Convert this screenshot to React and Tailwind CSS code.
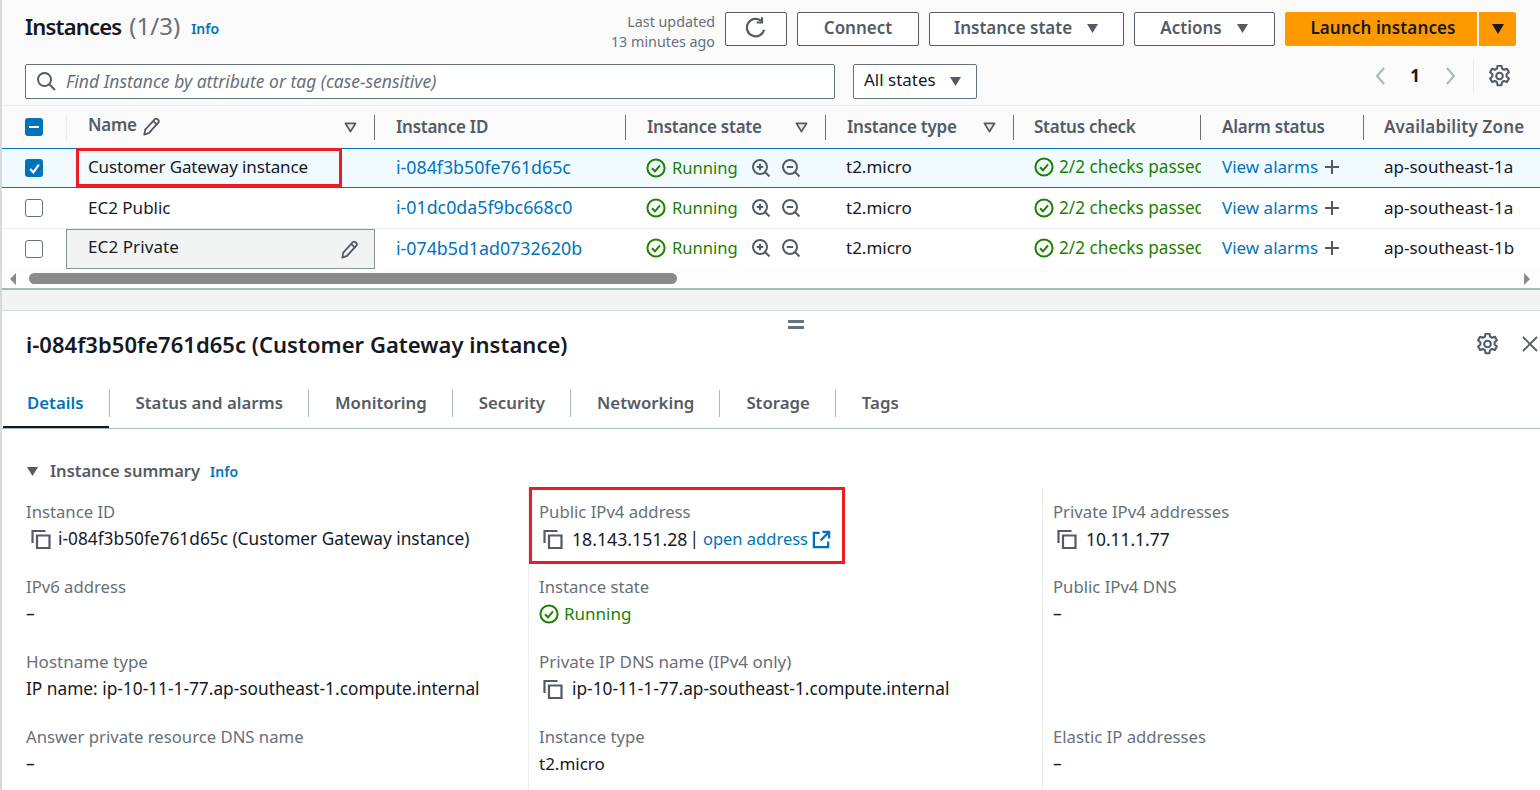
const Caret = ({ className = "" }) => (
  <svg viewBox="0 0 14 12" className={className}><path d="M1 1h12L7 11z" fill="#545b64" /></svg>
);
const FilterCaret = () => (
  <svg viewBox="0 0 14 12" className="w-[13px] h-[11px]"><path d="M1.5 1.5h11L7 10.5z" fill="#e9ebed" stroke="#545b64" strokeWidth="2" strokeLinejoin="round" /></svg>
);
const Pencil = () => (
  <svg viewBox="1.5 0.5 13 14.5" className="w-[17px] h-[19px]" fill="none" stroke="#545b64" strokeWidth="1.4" strokeLinejoin="round"><path d="M2.5 14l.7-3.8 7.2-7.9c.6-.6 1.5-.7 2.2-.1l.5.5c.6.6.6 1.5.1 2.1l-7.1 7.9z" /><path d="M9.3 3.6l3.2 2.9" /></svg>
);
const Check = ({ className = "w-5 h-5" }) => (
  <svg viewBox="0 0 20 20" className={`${className} shrink-0`} fill="none" stroke="#1d8102" strokeWidth="2"><circle cx="10" cy="10" r="8.6" /><path d="M6 10.3l3 3 5-6" /></svg>
);
const Zoom = ({ plus }) => (
  <svg viewBox="0 0 20 20" className="w-5 h-5 shrink-0" fill="none" stroke="#545b64" strokeWidth="2"><circle cx="9" cy="9" r="7" /><path d="M14 14l4.5 4.5" /><path d="M5.8 9h6.4" />{plus && <path d="M9 5.8v6.4" />}</svg>
);
const Copy = () => (
  <svg viewBox="0 0 20 20" className="w-5 h-5 shrink-0" fill="none" stroke="#545b64" strokeWidth="2.2"><path d="M1.5 14V2h13" /><path d="M6 6.5h12.5v12.5H6z" /></svg>
);
const Gear = () => (
  <svg viewBox="1.5 1 17 18" className="w-[21px] h-[22px]" fill="none" stroke="#545b64" strokeWidth="1.7" strokeLinejoin="round"><circle cx="10" cy="10" r="2.7" /><path d="M8.4 1.5h3.2l.5 2.5 1.6.9 2.4-.8 1.6 2.8-1.9 1.7v1.8l1.9 1.7-1.6 2.8-2.4-.8-1.6.9-.5 2.5H8.4l-.5-2.5-1.6-.9-2.4.8-1.6-2.8 1.9-1.7V8.6L2.3 6.9l1.6-2.8 2.4.8 1.6-.9z" /></svg>
);
const OuterBtn = ({ children, className = "" }) => (
  <button className={`h-[34px] pb-[2px] rounded-[2px] border border-[#545b64] bg-white flex items-center justify-center font-semibold text-[#545b64] text-[17px] ${className}`}>{children}</button>
);
const Head = ({ children, filter, cls = "pl-[21px]" }) => (
  <div className={`relative flex items-center justify-between pr-[18px] text-[17px] font-semibold text-[#545b64] h-full tracking-[-0.25px] ${cls}`}>
    <span className="flex items-center gap-[6px] whitespace-nowrap">{children}</span>
    {filter && <FilterCaret />}
    <span className="absolute right-0 top-[9px] h-[25px] w-px bg-[#687078]" />
  </div>
);
const rows = [
  { n: "Customer Gateway instance", id: "i-084f3b50fe761d65c", az: "ap-southeast-1a", sel: true, h: "h-10", pb: "pb-[2px]", rp: "", tr: "tracking-[-0.12px]" },
  { n: "EC2 Public", id: "i-01dc0da5f9bc668c0", az: "ap-southeast-1a", h: "h-[41px]", pb: "pb-[1px]", rp: "", tr: "" },
  { n: "EC2 Private", id: "i-074b5d1ad0732620b", az: "ap-southeast-1b", hov: true, h: "h-10", pb: "pb-[2px]", rp: "pb-[2px]", tr: "tracking-[0.1px]" },
];
const cols = "grid grid-cols-[67px_308px_251px_200px_188px_187px_163px_176px]";
const Field = ({ label, children, lc = "text-[16.7px]" }) => (
  <div className="h-[75px]">
    <div className={`text-[#687078] leading-[24px] whitespace-nowrap ${lc}`}>{label}</div>
    <div className="text-[#16191f] text-[17.3px] leading-[24px] mt-[3px] whitespace-nowrap flex items-center">{children}</div>
  </div>
);
const Dash = () => <span>–</span>;
const Tab = ({ children, active, last }) => (
  <div className="relative h-full flex items-center">
    <span className={`pb-[2px] text-[16.8px] font-semibold whitespace-nowrap ${active ? "text-[#0073bb] pl-[24px] pr-[25px]" : "text-[#545b64] pl-[26px] pr-[25px]"}`}>{children}</span>
    {!last && <span className="w-px h-[27px] bg-[#aab7b8]" />}
    {active && <span className="absolute left-0 right-px bottom-0 h-[2px] bg-[#16191f]" />}
  </div>
);
export default function App() {
  return (
    <div className="w-[1540px] h-[790px] overflow-hidden bg-white border-l-2 border-[#d5dbdb] flex flex-col font-['Noto_Sans',sans-serif]">
      <section className="bg-[#fafafa] h-[106px] shrink-0 border-b border-[#eaeded] pl-[23px] pr-[24px] pt-3">
        <div className="flex items-start h-[34px]">
          <div className="flex items-center h-[28px]">
            <h1 className="text-[22px] font-semibold text-[#16191f] tracking-[-0.8px]">Instances <span className="ml-[3px] text-[24px] tracking-normal font-normal text-[#687078]">(1/3)</span></h1>
            <span className="ml-[11px] mt-[5px] text-[#0073bb] text-[14px] font-semibold">Info</span>
          </div>
          <div className="ml-auto flex items-start">
            <div className="text-right text-[#687078] text-[14.3px] leading-[20px] mr-[10px]">Last updated<br />13 minutes ago</div>
            <OuterBtn className="w-[62px]">
              <svg viewBox="0 0 20 20" className="w-[24px] h-[24px]" fill="none" stroke="#545b64" strokeWidth="1.8"><path d="M16.8 11.5A7.3 7.3 0 1 1 14.6 4.2" /><path d="M15 1v4.4h-4.4" /></svg>
            </OuterBtn>
            <OuterBtn className="w-[122px] ml-[10px]">Connect</OuterBtn>
            <OuterBtn className="w-[195px] ml-[10px] gap-[14px]">Instance state <Caret className="w-[13px] h-[11px]" /></OuterBtn>
            <OuterBtn className="w-[141px] ml-[10px] gap-[14px]">Actions <Caret className="w-[13px] h-[11px]" /></OuterBtn>
            <button className="ml-[10px] h-[34px] pb-[2px] pl-[4px] w-[192px] rounded-l-[2px] bg-[#ff9900] text-[#16191f] font-semibold text-[17px] tracking-[0.12px]">Launch instances</button>
            <button className="ml-[2px] h-[34px] w-[37px] rounded-r-[2px] bg-[#ff9900] flex items-center justify-center"><svg viewBox="0 0 14 12" className="w-[14px] h-[12px]"><path d="M1 1h12L7 11z" fill="#16191f" /></svg></button>
          </div>
        </div>
        <div className="flex items-start mt-[18px]">
          <div className="w-[810px] h-[35px] pb-[1px] rounded-[2px] border border-[#687078] bg-white flex items-center pl-[10px]">
            <svg viewBox="0 0 20 20" className="w-[20px] h-[20px]" fill="none" stroke="#545b64" strokeWidth="2"><circle cx="8.5" cy="8.5" r="6.5" /><path d="M13 13l6 6" /></svg>
            <span className="ml-[10px] italic text-[#687078] text-[17.5px]">Find Instance by attribute or tag (case-sensitive)</span>
          </div>
          <div className="ml-[18px] w-[124px] h-[35px] pb-[3px] rounded-[2px] border border-[#687078] bg-white flex items-center justify-between pl-[10px] pr-[14px] text-[#16191f] text-[17px]">All states <Caret className="w-[13px] h-[11px] mt-[3px]" /></div>
          <div className="ml-auto mr-[6px] flex items-center h-[24px] text-[#16191f]">
            <svg viewBox="0 0 12 20" className="w-[12px] h-[20px]" fill="none" stroke="#aab7b8" strokeWidth="2"><path d="M10 2L3 10l7 8" /></svg>
            <span className="ml-[24px] mr-[25px] font-bold text-[17px]">1</span>
            <svg viewBox="0 0 12 20" className="w-[12px] h-[20px]" fill="none" stroke="#aab7b8" strokeWidth="2"><path d="M2 2l7 8-7 8" /></svg>
            <span className="ml-[16px] w-px h-[34px] bg-[#eaeded]" />
            <span className="ml-[15px]"><Gear /></span>
          </div>
        </div>
      </section>

      <section className="-ml-[2px] shrink-0">
        <div className={`${cols} h-[42px] bg-[#fafafa]`}>
          <div className="flex items-center pl-[25px] relative">
            <span className="w-[18px] h-[18px] rounded-[3px] bg-[#0073bb] flex items-center justify-center"><span className="w-[10px] h-[2px] bg-white" /></span>
            <span className="absolute right-0 top-[9px] h-[25px] w-px bg-[#eaeded]" />
          </div>
          <Head filter><span className="-mt-[5px] flex items-center gap-[6px]">Name <span className="mt-[3px]"><Pencil /></span></span></Head>
          <Head>Instance ID</Head>
          <Head filter>Instance state</Head>
          <Head filter>Instance type</Head>
          <Head cls="pl-[20px]">Status check</Head>
          <Head>Alarm status</Head>
          <div className="pl-[20px] flex items-center text-[17px] font-semibold text-[#545b64] whitespace-nowrap tracking-[0.2px]">Availability Zone</div>
        </div>
        {rows.map((r) => (
          <div key={r.id} className={`${cols} ${r.h} text-[17px] ${r.sel ? "bg-[#f1faff] border-y border-[#0073bb]" : "bg-white"} ${r.n === "EC2 Public" ? "border-b border-[#eaeded]" : ""}`}>
            <div className="flex items-center pl-[25px]">
              {r.sel ? (
                <span className="w-[18px] h-[18px] rounded-[3px] bg-[#0073bb] flex items-center justify-center">
                  <svg viewBox="0 0 12 12" className="w-[13px] h-[13px]" fill="none" stroke="white" strokeWidth="2"><path d="M2 6.5l3 3 5-7" /></svg>
                </span>
              ) : (
                <span className="w-[18px] h-[18px] rounded-[3px] border border-[#687078] bg-white" />
              )}
            </div>
            <div className={`relative flex items-center pl-[21px] pr-[16px] text-[#16191f] whitespace-nowrap ${r.tr} ${r.hov ? "bg-[#f2f3f3] border border-[#879596] -ml-px pb-[4px]" : r.pb}`}>
              {r.n}
              {r.hov && <span className="ml-auto mt-[4px]"><Pencil /></span>}
              {r.sel && <span className="absolute left-[9px] -top-px w-[266px] h-[39px] border-[3px] border-[#ed1c24] pointer-events-none" />}
            </div>
            <div className={`flex items-center pl-[21px] ${r.pb} text-[17.8px] text-[#0073bb] whitespace-nowrap`}>{r.id}</div>
            <div className={`flex items-center pl-[20px] ${r.rp} text-[#1d8102] whitespace-nowrap`}>
              <Check /><span className="ml-[6px] text-[16.6px]">Running</span>
              <span className="ml-[13px] flex gap-[10px]"><Zoom plus /><Zoom /></span>
            </div>
            <div className={`flex items-center pl-[20px] ${r.pb} text-[#16191f]`}>t2.micro</div>
            <div className={`flex items-center pl-[20px] ${r.pb} text-[#1d8102] text-[17.2px] whitespace-nowrap overflow-hidden`}>
              <Check /><span className="ml-[5px]">2/2 checks passed</span>
            </div>
            <div className={`flex items-center pl-[21px] ${r.pb} text-[#0073bb] whitespace-nowrap`}>
              View alarms
              <svg viewBox="0 0 16 16" className="ml-[6px] w-4 h-4" stroke="#545b64" strokeWidth="2"><path d="M8 1v14M1 8h14" /></svg>
            </div>
            <div className={`flex items-center pl-[20px] ${r.pb} text-[#16191f] whitespace-nowrap`}>{r.az}</div>
          </div>
        ))}
      </section>

      <div className="-ml-[2px] h-[21px] shrink-0 bg-[#fdfdfd] flex items-center border-b-2 border-[#aab7b8]">
        <svg viewBox="0 0 8 12" className="ml-[9px] w-[8px] h-[12px]"><path d="M7 0v12L1 6z" fill="#8a8a8a" /></svg>
        <span className="ml-[12px] w-[648px] h-[11px] rounded-full bg-[#8a8a8a]" />
        <svg viewBox="0 0 8 12" className="ml-auto mr-[9px] w-[8px] h-[12px]"><path d="M1 0v12l6-6z" fill="#8a8a8a" /></svg>
      </div>
      <div className="h-[21px] shrink-0 bg-[#f2f3f3] border-b border-[#d5dbdb]" />

      <section className="relative flex-1 min-w-0">
        <div className="absolute left-[786px] top-[9px] w-[16px] flex flex-col gap-[3px]"><span className="h-[3px] bg-[#687078]" /><span className="h-[3px] bg-[#687078]" /></div>
        <div className="flex items-center justify-between h-[68px] pb-[2px] pl-[24px] pr-[2px]">
          <h2 className="text-[22px] font-semibold text-[#16191f] tracking-[0.03px] whitespace-nowrap">i-084f3b50fe761d65c (Customer Gateway instance)</h2>
          <div className="flex items-center gap-[24px]">
            <Gear />
            <svg viewBox="0 0 16 16" className="w-4 h-4" stroke="#545b64" strokeWidth="1.8"><path d="M1 1l14 14M15 1L1 15" /></svg>
          </div>
        </div>
        <div className="h-[50px] flex items-stretch border-b border-[#aab7b8] pl-px">
          <Tab active>Details</Tab>
          <Tab>Status and alarms</Tab>
          <Tab>Monitoring</Tab>
          <Tab>Security</Tab>
          <Tab>Networking</Tab>
          <Tab>Storage</Tab>
          <Tab last>Tags</Tab>
        </div>
        <div className="pl-[24px] mt-[31px] h-[22px] flex items-center">
          <Caret className="w-[13px] h-[11px]" />
          <span className="ml-[11px] text-[#545b64] text-[16.5px] font-semibold">Instance summary</span>
          <span className="ml-[10px] text-[#0073bb] text-[14px] font-semibold">Info</span>
        </div>
        <div className="grid grid-cols-[527px_514px_1fr] mt-[6px]">
          <div className="pl-[24px] pt-[12px] border-r border-[#eaeded]">
            <Field label="Instance ID"><span className="ml-[5px] mr-[7px]"><Copy /></span>i-084f3b50fe761d65c (Customer Gateway instance)</Field>
            <Field label="IPv6 address"><Dash /></Field>
            <Field label="Hostname type" lc="text-[17px]">IP name: ip-10-11-1-77.ap-southeast-1.compute.internal</Field>
            <Field label="Answer private resource DNS name"><Dash /></Field>
          </div>
          <div className="pl-[10px] pt-[12px] border-r border-[#eaeded]">
            <div className="relative">
              <span className="absolute -left-[10px] -top-[13px] w-[316px] h-[77px] border-[3px] border-[#ed1c24] pointer-events-none" />
              <Field label="Public IPv4 address"><span className="ml-[4px] mr-[9px]"><Copy /></span><span className="text-[17.7px]">18.143.151.28</span><span className="ml-[2px]">|</span><span className="text-[#0073bb] ml-[4px] text-[16.5px]">open address</span>
                <svg viewBox="0 0 20 20" className="ml-[4px] w-[19px] h-[19px]" fill="none" stroke="#0073bb" strokeWidth="2.4"><path d="M8 3H2v15h15v-6" /><path d="M11 2h7v7M17.5 2.5L9 11" /></svg>
              </Field>
            </div>
            <Field label="Instance state"><Check /><span className="ml-[5px] text-[#1d8102] text-[17px]">Running</span></Field>
            <Field label="Private IP DNS name (IPv4 only)" lc="text-[17px]"><span className="ml-[4px] mr-[9px]"><Copy /></span>ip-10-11-1-77.ap-southeast-1.compute.internal</Field>
            <Field label="Instance type"><span className="text-[17px]">t2.micro</span></Field>
          </div>
          <div className="pl-[10px] pt-[12px]">
            <Field label="Private IPv4 addresses"><span className="ml-[4px] mr-[9px]"><Copy /></span><span className="text-[17.4px]">10.11.1.77</span></Field>
            <Field label="Public IPv4 DNS"><Dash /></Field>
            <div className="h-[75px]" />
            <Field label="Elastic IP addresses"><Dash /></Field>
          </div>
        </div>
      </section>
    </div>
  );
}
